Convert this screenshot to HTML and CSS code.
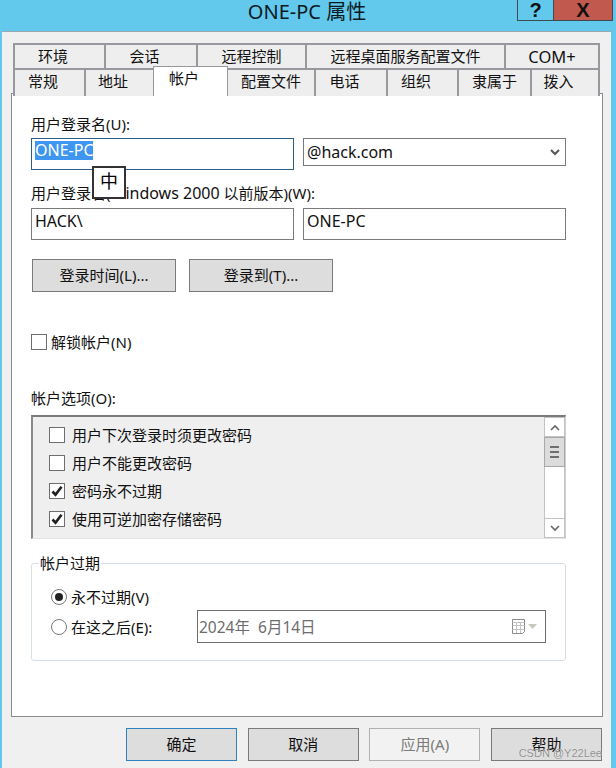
FILE: index.html
```html
<!DOCTYPE html>
<html lang="zh-CN">
<head>
<meta charset="utf-8">
<title>ONE-PC 属性</title>
<link rel="stylesheet" href="styles.css">
</head>
<body>
<div class="window">
  <header class="titlebar">
    <span></span>
    <h1 class="title">ONE-PC 属性</h1>
    <div class="caption">
      <button class="cap cap-help">?</button>
      <button class="cap cap-close">X</button>
    </div>
  </header>
  <main class="client">
    <div class="tabs tabs-1">
      <div class="tab short">环境</div><div class="tab short">会话</div><div class="tab">远程控制</div><div class="tab">远程桌面服务配置文件</div><div class="tab tab-latin">COM+</div>
    </div>
    <div class="tabs tabs-2">
      <div class="tab short">常规</div><div class="tab short">地址</div><div class="tab tab-active short">帐户</div><div class="tab">配置文件</div><div class="tab short">电话</div><div class="tab short">组织</div><div class="tab">隶属于</div><div class="tab short">拨入</div>
    </div>
    <section class="panel">
      <div class="label first">用户登录名(U):</div>
      <div class="field-row">
        <div class="field focus"><span class="selected">ONE-PC</span></div>
        <div class="combo"><span>@hack.com</span>
          <svg class="combo-arrow" width="10" height="7" viewBox="0 0 10 7"><path d="M1 1l4 4 4-4" fill="none" stroke="#555" stroke-width="2"/></svg>
        </div>
      </div>
      <div class="label second">用户登录名(<span class="latin">Windows 2000</span> 以前版本)(W):</div>
      <div class="field-row">
        <div class="field">HACK\</div>
        <div class="field">ONE-PC</div>
      </div>
      <div class="action-row">
        <button class="btn btn-action">登录时间(L)...</button>
        <button class="btn btn-action">登录到(T)...</button>
      </div>
      <div class="check-line unlock"><span class="box"></span><span>解锁帐户(N)</span></div>
      <div class="label options">帐户选项(O):</div>
      <div class="listbox">
        <ul class="list">
          <li class="check-line"><span class="box"></span><span>用户下次登录时须更改密码</span></li>
          <li class="check-line"><span class="box"></span><span>用户不能更改密码</span></li>
          <li class="check-line"><span class="box"><svg width="14" height="14" viewBox="0 0 14 14"><path d="M2.5 7.500l3 3.200 6-8" fill="none" stroke="#222" stroke-width="2.700"/></svg></span><span>密码永不过期</span></li>
          <li class="check-line"><span class="box"><svg width="14" height="14" viewBox="0 0 14 14"><path d="M2.5 7.500l3 3.200 6-8" fill="none" stroke="#222" stroke-width="2.700"/></svg></span><span>使用可逆加密存储密码</span></li>
        </ul>
        <div class="scrollbar">
          <div class="sb-btn"><svg width="10" height="7" viewBox="0 0 10 7"><path d="M1 6l4-4 4 4" fill="none" stroke="#666" stroke-width="1.600"/></svg></div>
          <div class="sb-thumb"><i></i><i></i><i></i></div>
          <div class="sb-track"></div>
          <div class="sb-btn"><svg width="10" height="7" viewBox="0 0 10 7"><path d="M1 1l4 4 4-4" fill="none" stroke="#666" stroke-width="1.600"/></svg></div>
        </div>
      </div>
      <fieldset class="group">
        <legend class="legend">帐户过期</legend>
        <div class="radio-line first-radio"><span class="radio on"></span><span>永不过期(V)</span></div>
        <div class="date-row">
          <div class="radio-line"><span class="radio"></span><span>在这之后(E):</span></div>
          <div class="date">
            <span class="date-text">2024年&nbsp; 6月14日</span>
            <svg class="cal" width="26" height="16" viewBox="0 0 26 16">
              <path d="M.5.5h12v12l-2 2h-10z" fill="#fff" stroke="#8a8a8a"/>
              <path d="M.5 3.500h12M4.500 3v11M8.500 3v11M.5 6.500h12M.5 10.500h12" stroke="#c4c4c4" fill="none"/>
              <path d="M16 5h9l-4.500 5z" fill="#c8c8c0"/>
            </svg>
          </div>
        </div>
      </fieldset>
    </section>
    <div class="footer">
      <button class="btn btn-foot btn-default">确定</button>
      <button class="btn btn-foot">取消</button>
      <button class="btn btn-foot btn-disabled">应用(A)</button>
      <button class="btn btn-foot">帮助</button>
    </div>
  </main>
  <div class="ime">中</div>
  <div class="watermark">CSDN @Y22Lee</div>
</div>
</body>
</html>
```
FILE: styles.css
```css
* { box-sizing: border-box; }
html, body { margin: 0; padding: 0; }
body {
  width: 616px;
  height: 768px;
  overflow: hidden;
  background: #62c8ec;
  font-family: "Noto Sans", "Noto Sans CJK SC", sans-serif;
  font-size: 15px;
  line-height: 20px;
  color: #111;
}
.window { position: relative; width: 616px; height: 768px; }

.titlebar {
  height: 31px;
  display: grid;
  grid-template-columns: 1fr auto 1fr;
  align-items: start;
}
.title {
  margin: 0;
  font-size: 20px;
  font-weight: 400;
  line-height: 24px;
  color: #0b1a22;
  transform: translateX(-1px);
}
.caption { justify-self: end; display: flex; margin-right: 3px; margin-top: -1px; }
.cap {
  height: 22px;
  padding: 0;
  border: 1px solid #3c4a52;
  font-family: "Liberation Sans", sans-serif;
  font-size: 20px;
  font-weight: 700;
  line-height: 16px;
  color: #111;
}
.cap-help { width: 36px; background: #62c8ec; border-right: 0; }
.cap-close { width: 60px; background: #c2594f; border-left: 1px solid #3c4a52; }

.client {
  width: 609px;
  height: 737px;
  margin-left: 2px;
  padding-top: 11px;
  background: #f0f0f0;
  border-top: 1px solid #9aa8b4;
}
.tabs { display: grid; margin-left: 11px; width: 587px; }
.tabs-1 { grid-template-columns: 91px 92px 109px 199px 96px; height: 25px; }
.tabs-2 { grid-template-columns: 71px 69px 75px 86px 72px 71px 73px 70px; height: 25px; }
.tab {
  text-align: center;
  line-height: 23px;
  background: #eeeeee;
  border: 2px solid #98989e;
  border-bottom: 0;
  border-right-width: 0;
}
.tab.short { padding-right: 13px; }
.tab.tab-latin { font-size: 16.5px; }
.tab:last-child { border-right-width: 2px; }
.tab-active {
  position: relative;
  z-index: 2;
  height: 30px;
  margin-top: -2px;
  line-height: 22px;
  background: #fff;
  border: 1px solid #98989e;
  border-bottom: 0;
}
.tab-active + .tab { border-left-width: 0; }

.panel {
  width: 592px;
  height: 624px;
  margin-left: 9px;
  padding: 0 36px 0 19px;
  background: #fff;
  border: 1px solid #8a8a90;
}
.label { height: 20px; }
.label.first { margin-top: 20px; margin-bottom: 4px; }
.label.second { margin-top: 13px; margin-bottom: 5px; }
.label.options { margin-top: 38px; margin-bottom: 7px; }
.latin { font-size: 16px; }

.field-row {
  display: grid;
  grid-template-columns: 263px 263px;
  column-gap: 9px;
  align-items: start;
}
.field {
  height: 32px;
  padding: 1px 3px;
  border: 1px solid #7a7a7a;
  background: #fff;
  font-size: 16px;
  line-height: 22px;
}
.field.focus { border-color: #2f5f86; padding-top: 1px; }
.selected {
  display: block;
  width: 58px;
  height: 19px;
  line-height: 19px;
  margin-top: 1px;
  white-space: nowrap;
  background: #3f96f0;
  color: #fff;
}
.combo {
  height: 28px;
  padding: 2px 3px;
  border: 1px solid #7a7a7a;
  display: flex;
  align-items: center;
  justify-content: space-between;
  font-size: 16px;
}
.combo-arrow { margin-right: 2px; }

.btn {
  font: inherit;
  padding: 0 0 2px;
  background: #dddddd;
  border: 1px solid #7a7a7a;
  color: #111;
}
.action-row { display: flex; gap: 13px; margin-top: 19px; margin-left: 1px; }
.btn-action { width: 144px; height: 33px; }

.check-line { display: flex; align-items: center; gap: 4px; }
.unlock { margin-top: 42px; height: 16px; }
.box {
  width: 16px;
  height: 16px;
  flex: none;
  background: #fff;
  border: 1px solid #6e6e6e;
  display: block;
}
.box svg { display: block; }

.listbox {
  display: flex;
  width: 535px;
  height: 124px;
  background: #efefef;
  border-top: 2px solid #7a7a7a;
  border-left: 2px solid #8a8a8a;
  border-right: 1px solid #cfcfcf;
  border-bottom: 1px solid #e4e4e4;
}
.list { flex: 1; list-style: none; margin: 0; padding: 4px 0 0 16px; }
.list .check-line { height: 28px; gap: 7px; }
.scrollbar {
  width: 21px;
  display: flex;
  flex-direction: column;
  background: #fff;
}
.sb-btn {
  height: 20px;
  flex: none;
  display: flex;
  align-items: center;
  justify-content: center;
  border: 1px solid #c2c2c2;
}
.sb-thumb {
  height: 30px;
  flex: none;
  display: flex;
  flex-direction: column;
  justify-content: center;
  align-items: center;
  gap: 3px;
  background: #dcdcdc;
  border: 1px solid #a8a8a8;
}
.sb-thumb i { display: block; width: 9px; height: 2px; background: #6e6e6e; }
.sb-track { flex: 1; border-left: 1px solid #c2c2c2; border-right: 1px solid #c2c2c2; }

.group {
  width: 535px;
  height: 108px;
  margin: 14px 0 0;
  padding: 0 19px 0 19px;
  border: 1px solid #d5dfe6;
  border-radius: 3px;
  min-width: 0;
}
.legend { padding: 0 1px; margin-left: -12px; line-height: 20px; height: 20px; }
.radio-line { display: flex; align-items: center; gap: 4px; height: 20px; }
.first-radio { margin-top: 14px; }
.radio {
  width: 16px;
  height: 16px;
  flex: none;
  border: 1px solid #777;
  border-radius: 50%;
  background: #fff;
  display: flex;
  align-items: center;
  justify-content: center;
}
.radio.on::after {
  content: "";
  width: 8px;
  height: 8px;
  border-radius: 50%;
  background: #222;
}
.date-row {
  display: flex;
  align-items: center;
  justify-content: space-between;
  margin-top: 3px;
}
.date {
  width: 349px;
  height: 33px;
  padding: 0 7px 0 1px;
  border: 1px solid #6e6e6e;
  display: flex;
  align-items: center;
  justify-content: space-between;
  color: #6d6d6d;
  font-size: 15.5px;
}

.footer {
  display: flex;
  justify-content: flex-end;
  gap: 10.67px;
  margin-top: 11px;
  padding-right: 9px;
}
.btn-foot { width: 111px; height: 33px; }
.btn-default { border-color: #2f82bd; }
.btn-disabled { background: #f2f2f2; border-color: #b0b0b0; color: #7a7a7a; }

.ime {
  position: absolute;
  left: 92px;
  top: 166px;
  width: 34px;
  height: 33px;
  background: #fff;
  border: 2px solid #333;
  text-align: center;
  line-height: 27px;
  font-size: 18px;
  color: #000;
}
.watermark {
  position: absolute;
  right: 14px;
  top: 745px;
  font-family: "Liberation Sans", sans-serif;
  font-size: 11px;
  line-height: 16px;
  color: #8e8e8e;
  text-shadow: 0 0 1px #fff;
}
```
